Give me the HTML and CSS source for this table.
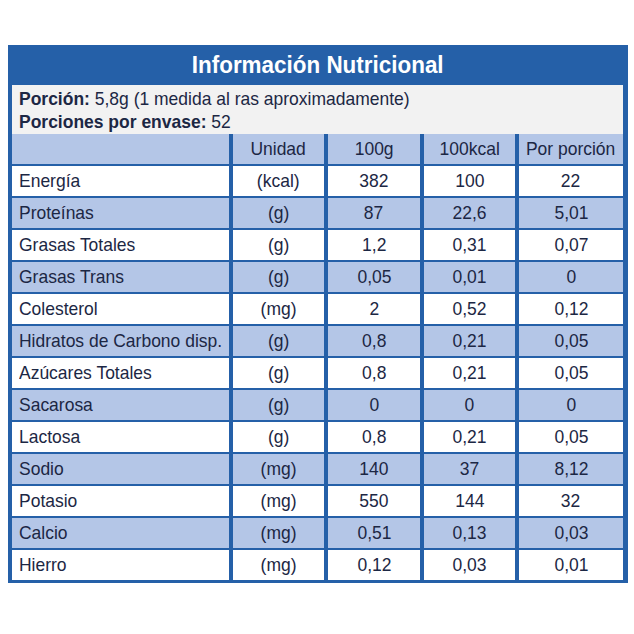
FILE: index.html
```html
<!DOCTYPE html>
<html lang="es">
<head>
<meta charset="utf-8">
<title>Información Nutricional</title>
<link rel="stylesheet" href="styles.css">
</head>
<body>
<div class="panel">
  <div class="title"><span class="tt">Información Nutricional</span></div>
  <div class="info">
    <div><span class="t"><b>Porción:</b> 5,8g (1 medida al ras aproximadamente)</span></div>
    <div><span class="t"><b>Porciones por envase:</b> 52</span></div>
  </div>
  <table class="grid">
    <colgroup>
      <col class="c1"><col class="c2"><col class="c3"><col class="c4"><col class="c5">
    </colgroup>
    <tr class="alt"><td></td><td class="num"><span class="t">Unidad</span></td><td class="num"><span class="t">100g</span></td><td class="num"><span class="t">100kcal</span></td><td class="num"><span class="t">Por porción</span></td></tr>
    <tr><td><span class="t">Energía</span></td><td class="num"><span class="t">(kcal)</span></td><td class="num"><span class="t">382</span></td><td class="num"><span class="t">100</span></td><td class="num"><span class="t">22</span></td></tr>
    <tr class="alt"><td><span class="t">Proteínas</span></td><td class="num"><span class="t">(g)</span></td><td class="num"><span class="t">87</span></td><td class="num"><span class="t">22,6</span></td><td class="num"><span class="t">5,01</span></td></tr>
    <tr><td><span class="t">Grasas Totales</span></td><td class="num"><span class="t">(g)</span></td><td class="num"><span class="t">1,2</span></td><td class="num"><span class="t">0,31</span></td><td class="num"><span class="t">0,07</span></td></tr>
    <tr class="alt"><td><span class="t">Grasas Trans</span></td><td class="num"><span class="t">(g)</span></td><td class="num"><span class="t">0,05</span></td><td class="num"><span class="t">0,01</span></td><td class="num"><span class="t">0</span></td></tr>
    <tr><td><span class="t">Colesterol</span></td><td class="num"><span class="t">(mg)</span></td><td class="num"><span class="t">2</span></td><td class="num"><span class="t">0,52</span></td><td class="num"><span class="t">0,12</span></td></tr>
    <tr class="alt"><td><span class="t">Hidratos de Carbono disp.</span></td><td class="num"><span class="t">(g)</span></td><td class="num"><span class="t">0,8</span></td><td class="num"><span class="t">0,21</span></td><td class="num"><span class="t">0,05</span></td></tr>
    <tr><td><span class="t">Azúcares Totales</span></td><td class="num"><span class="t">(g)</span></td><td class="num"><span class="t">0,8</span></td><td class="num"><span class="t">0,21</span></td><td class="num"><span class="t">0,05</span></td></tr>
    <tr class="alt"><td><span class="t">Sacarosa</span></td><td class="num"><span class="t">(g)</span></td><td class="num"><span class="t">0</span></td><td class="num"><span class="t">0</span></td><td class="num"><span class="t">0</span></td></tr>
    <tr><td><span class="t">Lactosa</span></td><td class="num"><span class="t">(g)</span></td><td class="num"><span class="t">0,8</span></td><td class="num"><span class="t">0,21</span></td><td class="num"><span class="t">0,05</span></td></tr>
    <tr class="alt"><td><span class="t">Sodio</span></td><td class="num"><span class="t">(mg)</span></td><td class="num"><span class="t">140</span></td><td class="num"><span class="t">37</span></td><td class="num"><span class="t">8,12</span></td></tr>
    <tr><td><span class="t">Potasio</span></td><td class="num"><span class="t">(mg)</span></td><td class="num"><span class="t">550</span></td><td class="num"><span class="t">144</span></td><td class="num"><span class="t">32</span></td></tr>
    <tr class="alt"><td><span class="t">Calcio</span></td><td class="num"><span class="t">(mg)</span></td><td class="num"><span class="t">0,51</span></td><td class="num"><span class="t">0,13</span></td><td class="num"><span class="t">0,03</span></td></tr>
    <tr><td><span class="t">Hierro</span></td><td class="num"><span class="t">(mg)</span></td><td class="num"><span class="t">0,12</span></td><td class="num"><span class="t">0,03</span></td><td class="num"><span class="t">0,01</span></td></tr>
  </table>
</div>
</body>
</html>
```
FILE: styles.css
```css
html, body {
  margin: 0;
  padding: 0;
  background: #ffffff;
}

body {
  font-family: "Liberation Sans", Arial, sans-serif;
  color: #1c2744;
}

.panel {
  width: 620px;
  margin: 45px 0 0 8px;
  padding: 0 1px 1px 0;
  box-sizing: border-box;
  background: #2560a8;
}

.title {
  height: 40px;
  line-height: 40px;
  text-align: center;
  color: #ffffff;
  font-weight: bold;
  font-size: 24px;
}

.tt {
  display: inline-block;
  transform: scaleX(0.935);
  transform-origin: center center;
}

.t {
  display: inline-block;
  white-space: nowrap;
  transform: scaleX(0.92);
  transform-origin: left center;
}

.info {
  margin: 0 4px 0 4px;
  background: #f2f2f2;
  padding: 2px 7px 1px;
  font-size: 19px;
  line-height: 23px;
}

.grid {
  width: 619px;
  table-layout: fixed;
  border-collapse: separate;
  border-spacing: 4px 2px;
  margin-top: -2px;
  font-size: 19px;
}

.c1 { width: 217px; }
.c2 { width: 91px; }
.c3 { width: 92px; }
.c4 { width: 91px; }
.c5 { width: 104px; }

.grid td {
  height: 30px;
  padding: 0 7px;
  background: #ffffff;
  white-space: nowrap;
  vertical-align: middle;
  line-height: 22px;
}

.grid tr.alt td {
  background: #b4c6e7;
}

.grid td.num {
  text-align: center;
  padding: 0;
}

.grid td.num .t {
  transform-origin: center center;
}
```
